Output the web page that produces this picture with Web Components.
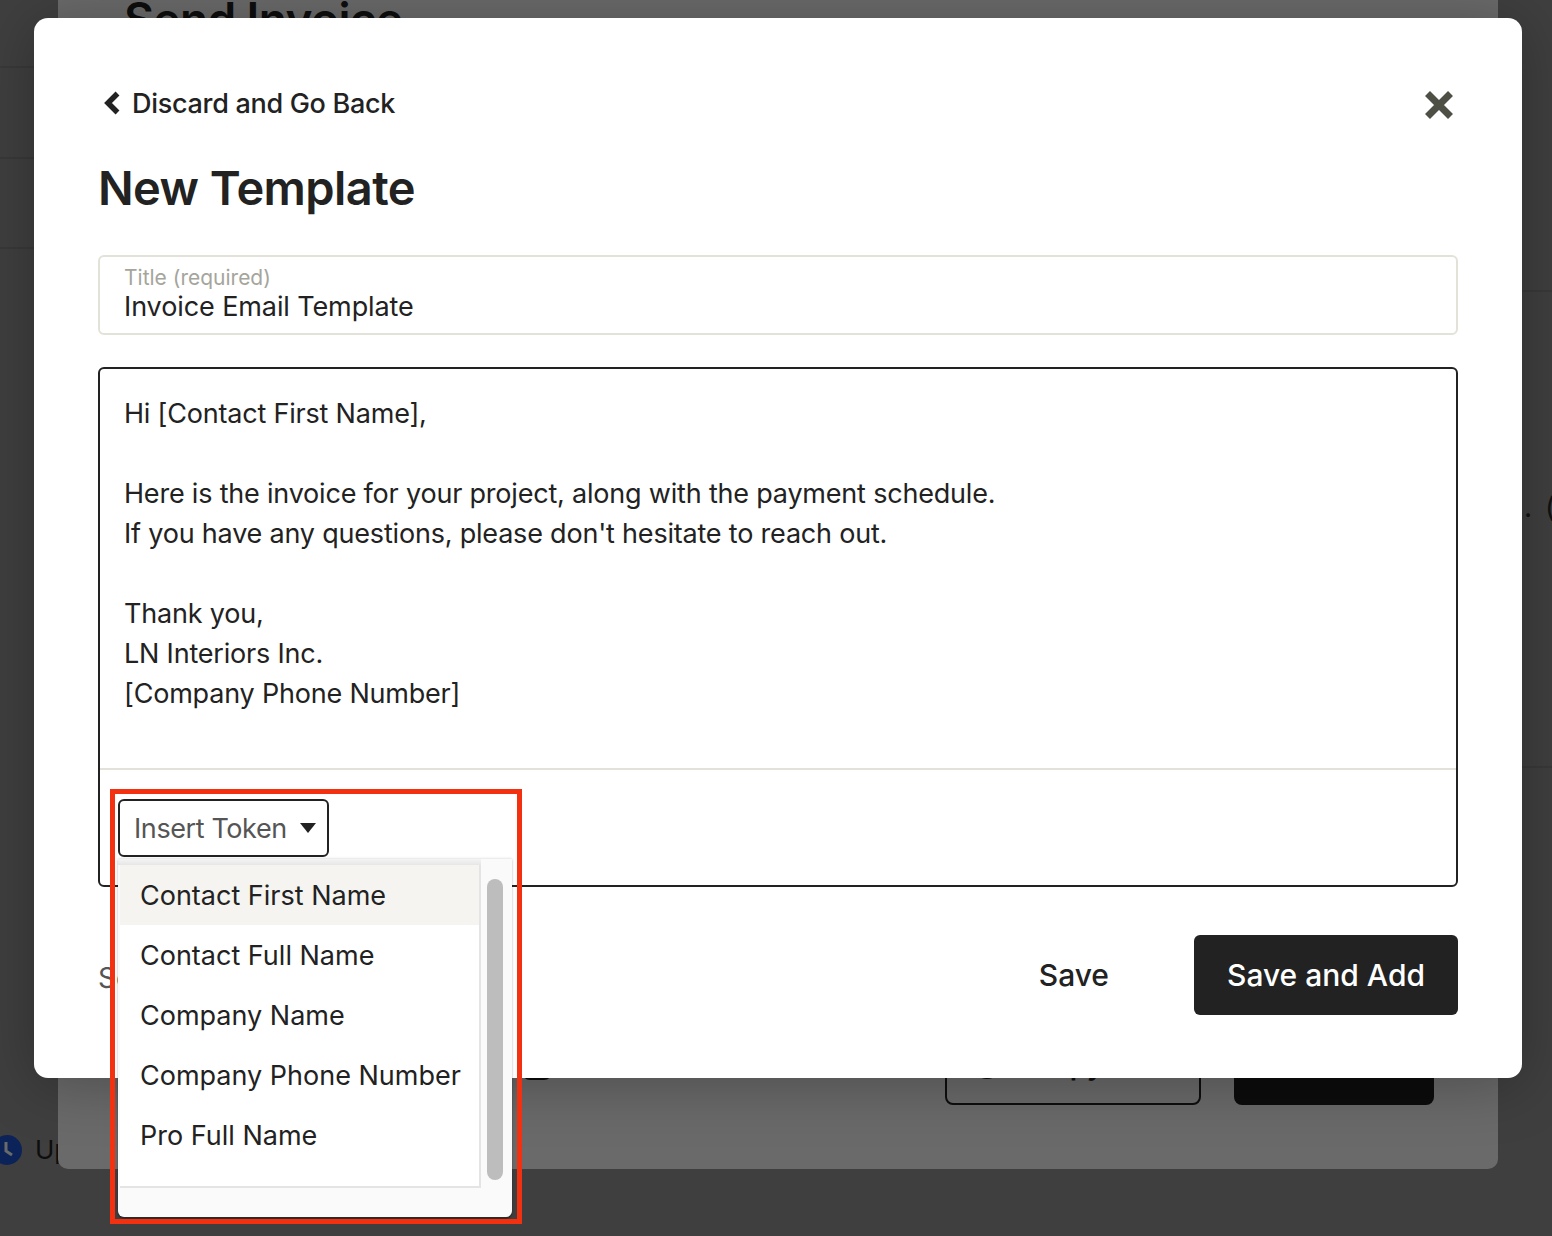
<!DOCTYPE html>
<html lang="en">
<head>
<meta charset="utf-8">
<title>New Template</title>
<style>
  html, body { margin: 0; height: 100%; }
  body { background: #3f3f3f; overflow: hidden; font-family: Inter, "Liberation Sans", sans-serif; color: #222; }
</style>
</head>
<body>
<page-backdrop></page-backdrop>
<modal-dialog>
  <title-field label="Title (required)" value="Invoice Email Template"></title-field>
  <template-editor>
    <p>Hi [Contact First Name],</p>
    <p>&nbsp;</p>
    <p>Here is the invoice for your project, along with the payment schedule.</p>
    <p>If you have any questions, please don't hesitate to reach out.</p>
    <p>&nbsp;</p>
    <p>Thank you,</p>
    <p>LN Interiors Inc.</p>
    <p>[Company Phone Number]</p>
  </template-editor>
</modal-dialog>
<call-out></call-out>

<script>
// dimmed page that sits behind the modal
class PageBackdrop extends HTMLElement {
  constructor() {
    super();
    this.attachShadow({ mode: 'open' });
  }

  connectedCallback() {
    this.shadowRoot.innerHTML = `
      <style>
        :host { display: block; position: absolute; inset: 0; overflow: hidden; }
        .rule { position: absolute; height: 2px; background: rgba(0,0,0,.09); }
        .panel {
          position: absolute; left: 58px; top: 0; width: 1440px; height: 1169px;
          box-sizing: border-box; padding: 0 64px 64px 66px;
          background: #6a6a6a; border-radius: 0 0 10px 10px;
          display: flex; flex-direction: column; justify-content: space-between;
        }
        h2 { margin: -9px 0 0; font-size: 46px; line-height: 56px; font-weight: 600; letter-spacing: -.6px; color: #0e0e0e; }
        .actions { display: flex; justify-content: flex-end; gap: 33px; }
        .outline, .solid { box-sizing: border-box; height: 80px; border-radius: 8px; font-size: 28px; display: flex; align-items: center; }
        .outline { width: 256px; padding-left: 26px; border: 2px solid #0e0e0e; gap: 31px; color: #0e0e0e; font-weight: 600; }
        .outline i { width: 28px; height: 28px; border: 3px solid #0e0e0e; border-radius: 50%; box-sizing: border-box; }
        .solid { width: 200px; background: #0c0c0c; }
        .side { position: absolute; left: -8px; top: 1134px; display: flex; align-items: center; gap: 13px; font-size: 26px; color: #0e0e0e; }
        .side svg { display: block; }
        .pill { position: absolute; left: 464px; top: 1040px; width: 30px; height: 40px; border-bottom: 3px solid #0c0c0c; border-radius: 8px; box-sizing: border-box; }
        .far { position: absolute; left: 1524px; top: 490px; font-size: 28px; color: #111; white-space: nowrap; letter-spacing: 13px; }
      </style>
      <div class="rule" style="left:0;top:66px;width:58px"></div>
      <div class="rule" style="left:0;top:157px;width:58px"></div>
      <div class="rule" style="left:0;top:247px;width:58px"></div>
      <div class="rule" style="left:1498px;top:290px;width:54px"></div>
      <div class="rule" style="left:1498px;top:766px;width:54px"></div>
      <div class="side">
        <svg width="30" height="30" viewBox="0 0 30 30"><circle cx="15" cy="15" r="15" fill="#0b2358"/><path d="M14 7v9l6 4" fill="none" stroke="#6a6a6a" stroke-width="3"/></svg>
        <span>Up</span>
      </div>
      <div class="far">.(</div>
      <div class="panel">
        <h2>Send Invoice</h2>
        <div class="actions">
          <div class="outline"><i></i><span>Copy</span></div>
          <div class="solid"></div>
        </div>
        <div class="pill"></div>
      </div>
    `;
  }
}

// the white dialog: header, slot for the form, footer
class ModalDialog extends HTMLElement {
  constructor() {
    super();
    this.attachShadow({ mode: 'open' });
  }

  connectedCallback() {
    this.shadowRoot.innerHTML = `
      <style>
        :host {
          display: block; position: absolute; left: 34px; top: 18px; width: 1488px; height: 1060px;
          box-sizing: border-box; padding: 68px 64px 0;
          background: #fff; border-radius: 14px;
          box-shadow: 0 6px 60px rgba(0,0,0,.28);
        }
        .top { display: flex; justify-content: space-between; align-items: center; height: 34px; }
        .back { display: flex; align-items: center; gap: 12px; margin-left: 6px; font-size: 27px; font-weight: 500; letter-spacing: -.3px; color: #222; }
        .back svg, .close svg { display: block; }
        .close { margin-right: 4px; margin-top: 4px; }
        h1 { margin: 40px 0 39px; font-size: 47px; line-height: 56px; font-weight: 600; letter-spacing: -.6px; color: #222; }
        footer { display: flex; justify-content: space-between; align-items: center; margin-top: 48px; height: 80px; }
        .hint { font-size: 28px; color: #555; padding-top: 6px; }
        .btns { display: flex; align-items: center; gap: 85px; }
        .save { font-size: 30px; font-weight: 500; color: #222; }
        .primary { width: 264px; height: 80px; border-radius: 6px; background: #222; color: #fff; font-size: 30px; font-weight: 500; display: flex; align-items: center; justify-content: center; }
      </style>
      <div class="top">
        <div class="back">
          <svg width="16" height="24" viewBox="0 0 16 24"><path d="M13.5 2.5 4 12l9.5 9.5" fill="none" stroke="#222" stroke-width="5.5"/></svg>
          <span>Discard and Go Back</span>
        </div>
        <div class="close">
          <svg width="30" height="30" viewBox="0 0 30 30"><path d="M3.5 3.5l23 23M26.5 3.5l-23 23" stroke="#4f5045" stroke-width="7"/></svg>
        </div>
      </div>
      <h1>New Template</h1>
      <slot></slot>
      <footer>
        <span class="hint">Se</span>
        <div class="btns">
          <span class="save">Save</span>
          <div class="primary">Save and Add</div>
        </div>
      </footer>
    `;
  }
}

class TitleField extends HTMLElement {
  constructor() {
    super();
    this.attachShadow({ mode: 'open' });
  }

  connectedCallback() {
    this.shadowRoot.innerHTML = `
      <style>
        :host {
          display: block; box-sizing: border-box; height: 80px; padding: 8px 24px 0;
          border: 2px solid #e2e2d8; border-radius: 6px;
        }
        .label { font-size: 21px; line-height: 26px; color: #a5a59c; }
        .value { font-size: 27px; line-height: 32px; letter-spacing: -.1px; color: #222; }
      </style>
      <div class="label">${this.getAttribute('label')}</div>
      <div class="value">${this.getAttribute('value')}</div>
    `;
  }
}

// body text goes in the slot, the token picker lives in the bottom strip
class TemplateEditor extends HTMLElement {
  constructor() {
    super();
    this.attachShadow({ mode: 'open' });
  }

  connectedCallback() {
    this.shadowRoot.innerHTML = `
      <style>
        :host {
          display: block; box-sizing: border-box; height: 520px; margin-top: 32px;
          border: 2px solid #222; border-radius: 6px;
        }
        .body { box-sizing: border-box; height: 401px; padding: 25px 24px 0; border-bottom: 2px solid #e2e2d8; font-size: 27px; line-height: 40px; letter-spacing: -.2px; color: #222; }
        ::slotted(p) { margin: 0; }
        .strip { position: relative; padding: 29px 18px 0; }
      </style>
      <div class="body"><slot></slot></div>
      <div class="strip"><token-picker></token-picker></div>
    `;
  }
}

class TokenPicker extends HTMLElement {
  constructor() {
    super();
    this.attachShadow({ mode: 'open' });
    this._tokens = ['Contact First Name', 'Contact Full Name', 'Company Name', 'Company Phone Number', 'Pro Full Name'];
  }

  connectedCallback() {
    const items = this._tokens.map((t, i) => `<li class="${i === 0 ? 'on' : ''}">${t}</li>`).join('');
    this.shadowRoot.innerHTML = `
      <style>
        :host { display: block; }
        .toggle {
          box-sizing: border-box; width: 211px; height: 58px; padding-left: 14px;
          border: 2px solid #222; border-radius: 6px;
          display: flex; align-items: center; gap: 13px;
          font-size: 27px; letter-spacing: -.4px; color: #555; background: #fff;
        }
        .toggle svg { display: block; }
        .menu {
          position: absolute; left: 18px; top: 89px; width: 394px; height: 358px; box-sizing: border-box;
          background: linear-gradient(#f4f4f4, #e6e6e6) top left / 363px 6px no-repeat, #fafafa;
          border-radius: 0 0 6px 6px; padding: 6px 2px 0;
          box-shadow: 0 0 3px rgba(0,0,0,.22), 0 2px 1px rgba(0,0,0,.3);
          display: flex; align-items: flex-start;
        }
        ul { list-style: none; margin: 0; padding: 0; width: 361px; height: 323px; box-sizing: border-box; background: #fff; border: solid #e4e4e4; border-width: 0 2px 2px 0; }
        li { height: 60px; padding-left: 20px; display: flex; align-items: center; font-size: 27px; color: #222; white-space: nowrap; }
        li.on { background: #f5f4f0; }
        .track { flex: 1; padding: 14px 0 0 6px; }
        .thumb { width: 16px; height: 301px; border-radius: 8px; background: #bdbdbd; }
      </style>
      <div class="toggle">
        <span>Insert Token</span>
        <svg width="16" height="10" viewBox="0 0 16 10"><path d="M0 0h16L8 10z" fill="#222"/></svg>
      </div>
      <div class="menu">
        <ul>${items}</ul>
        <div class="track"><div class="thumb"></div></div>
      </div>
    `;
  }
}

// red annotation box drawn over the screenshot
class CallOut extends HTMLElement {
  constructor() {
    super();
    this.attachShadow({ mode: 'open' });
  }

  connectedCallback() {
    this.shadowRoot.innerHTML = `
      <style>
        :host {
          display: block; position: absolute; left: 110px; top: 789px; width: 412px; height: 435px;
          box-sizing: border-box; border: 5px solid #f33010; pointer-events: none;
        }
      </style>
    `;
  }
}

customElements.define('page-backdrop', PageBackdrop);
customElements.define('modal-dialog', ModalDialog);
customElements.define('title-field', TitleField);
customElements.define('template-editor', TemplateEditor);
customElements.define('token-picker', TokenPicker);
customElements.define('call-out', CallOut);
</script>
</body>
</html>
